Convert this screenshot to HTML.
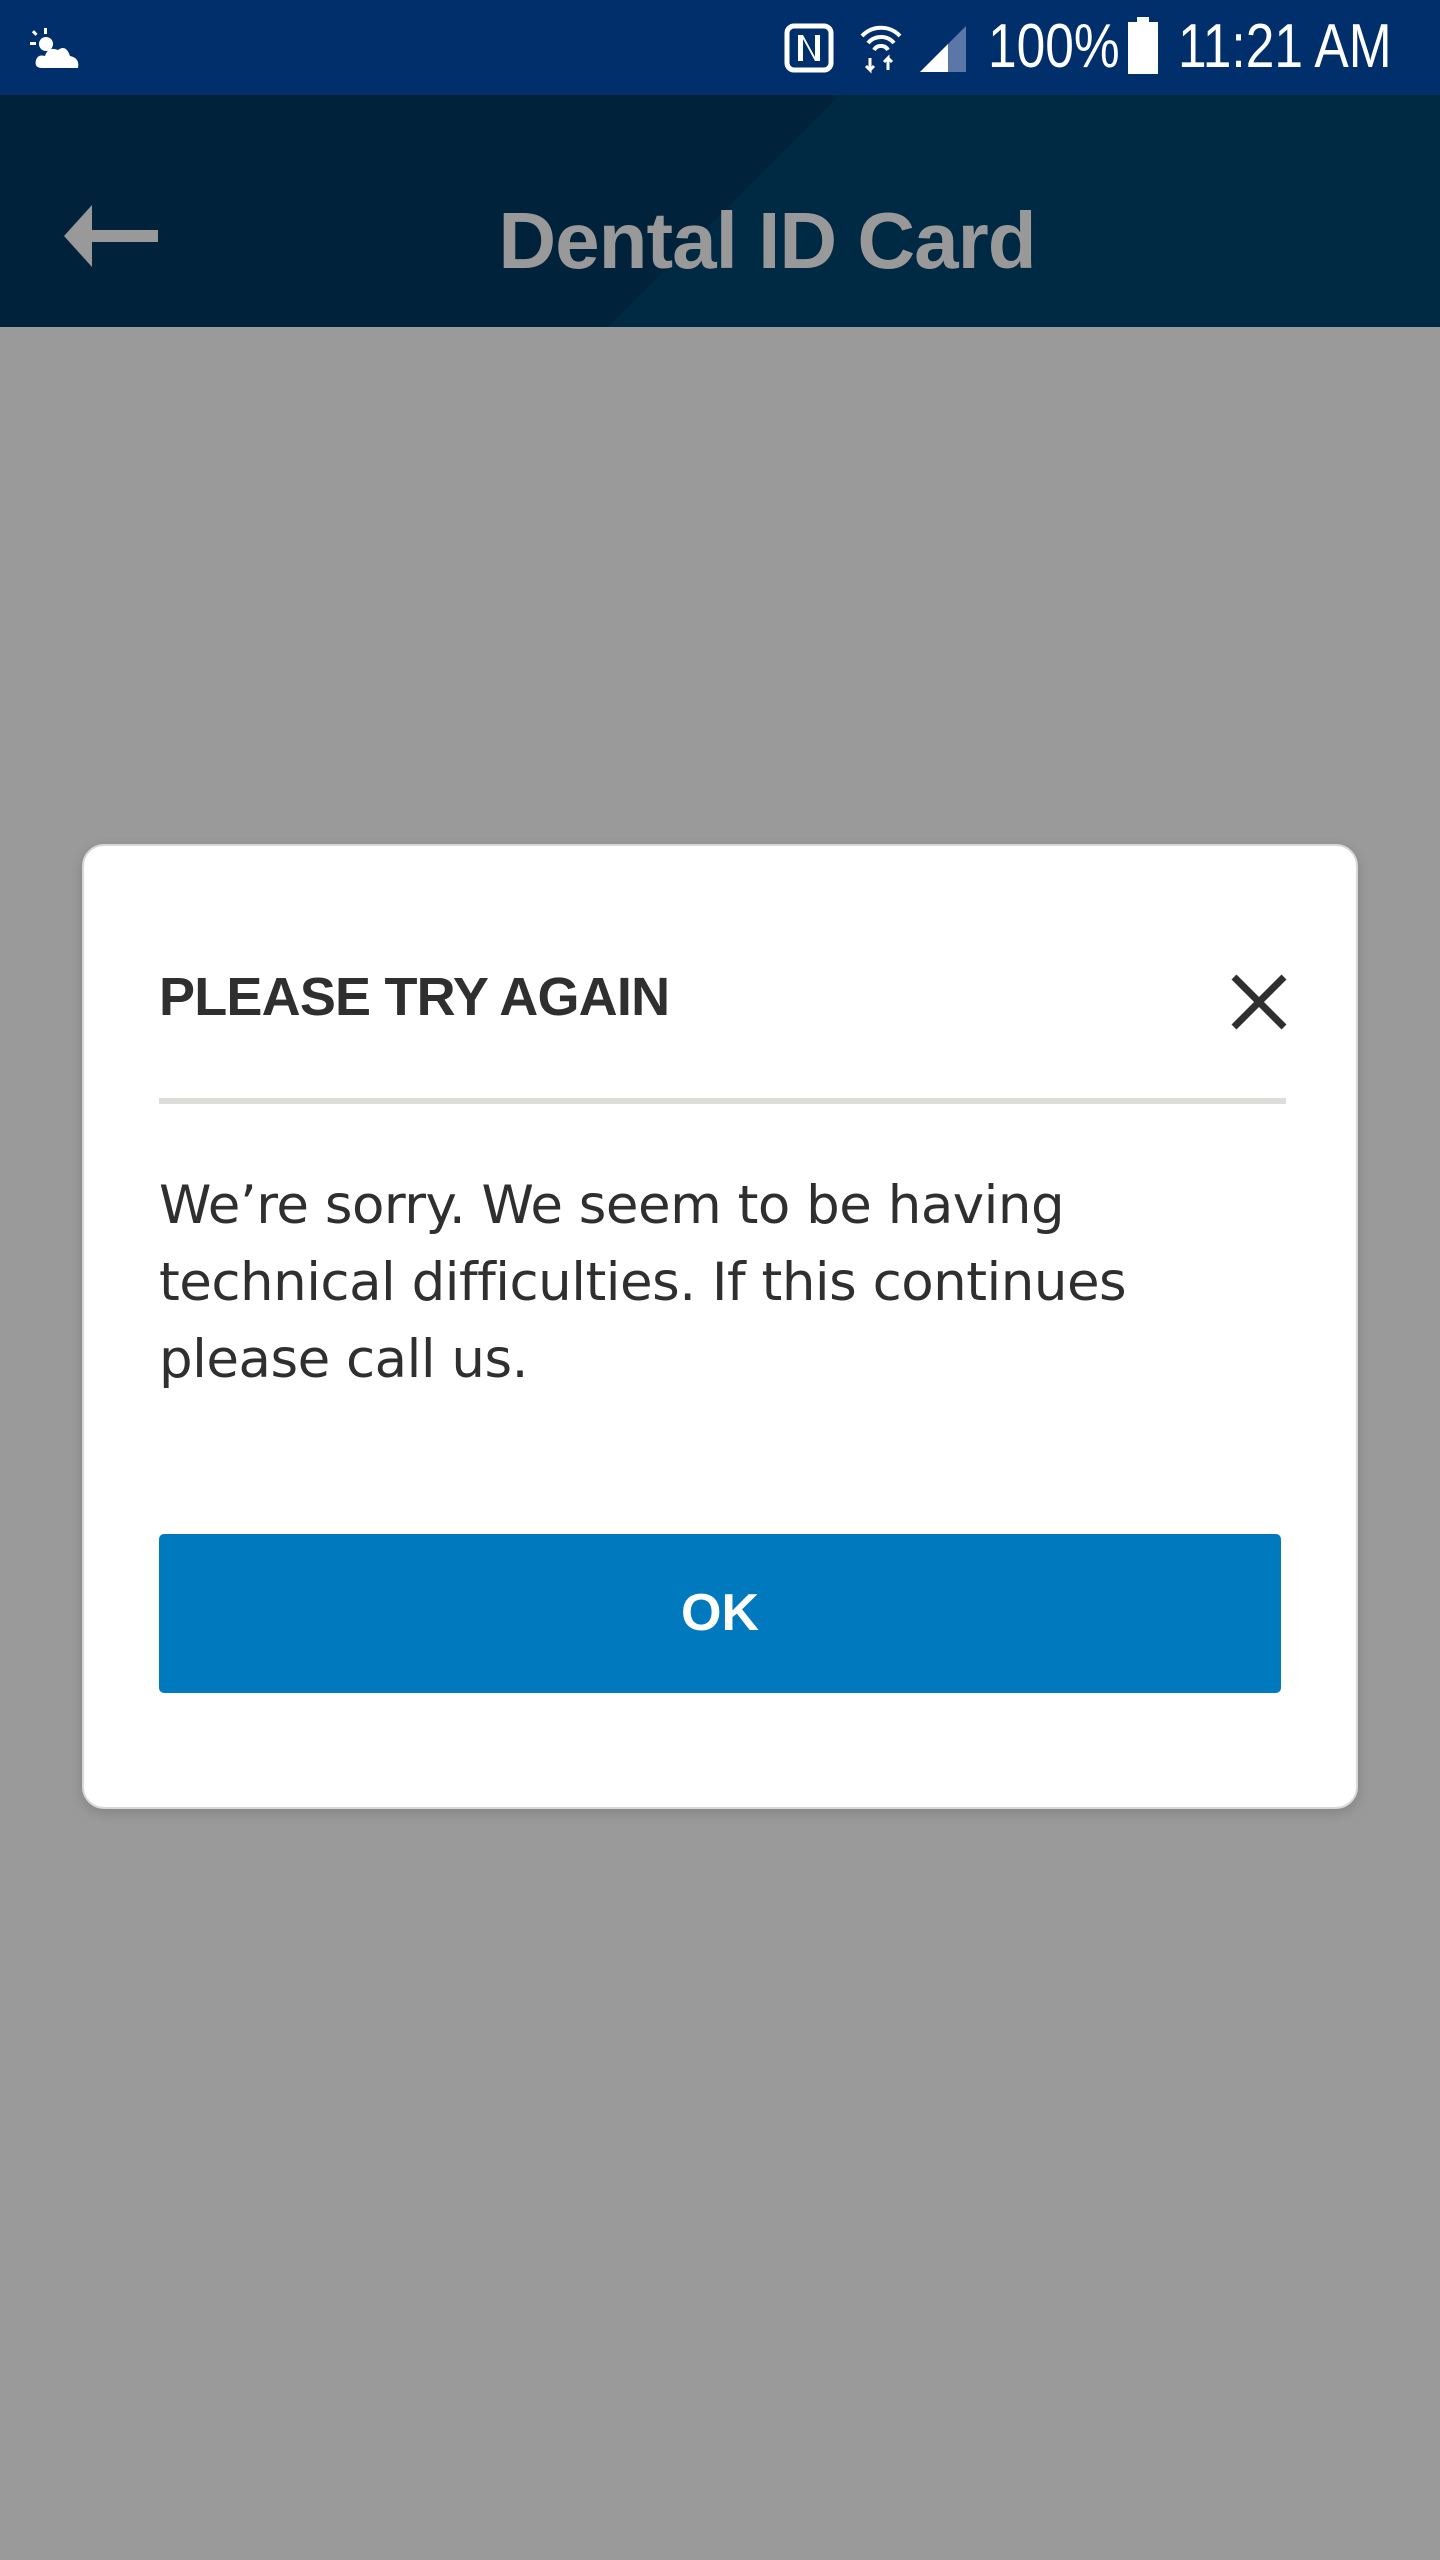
<!DOCTYPE html>
<html><head><meta charset="utf-8"><style>
html,body{margin:0;padding:0;width:1440px;height:2560px;overflow:hidden;background:#9a9a9a;font-family:"Liberation Sans",sans-serif}
.sb{position:absolute;left:0;top:0;width:1440px;height:95px;background:#002f6c;color:#fff}
.hd{position:absolute;left:0;top:95px;width:1440px;height:232px;background:#002943}
.hd2{position:absolute;left:0;top:95px;width:1440px;height:232px;background:#00223b;clip-path:polygon(0 0,840px 0,608px 232px,0 232px)}
.title{position:absolute;left:0;width:1534px;top:125px;height:232px;line-height:232px;text-align:center;color:#999;font-weight:bold;font-size:80px;letter-spacing:-1px}
.dlg{position:absolute;left:82px;top:844px;width:1272px;height:961px;background:#fff;border-radius:22px;border:2px solid #d8d8d8;box-shadow:0 4px 12px rgba(0,0,0,.15)}
.h{position:absolute;left:75px;top:120px;font-size:54px;font-weight:bold;color:#2f2f2f;letter-spacing:-0.8px}
.div{position:absolute;left:75px;top:252px;width:1127px;height:6px;background:#dcdcd9}
.body{position:absolute;left:75px;top:321px;line-height:77px;color:#2f2f2f;font-family:"DejaVu Sans","Liberation Sans",sans-serif;font-size:53px;letter-spacing:-0.5px}
.btn{position:absolute;left:75px;top:688px;width:1122px;height:159px;background:#0079be;border-radius:5px;color:#fff;font-weight:bold;font-size:52px;text-align:center;line-height:159px}
</style></head><body>
<div class="sb">
<svg style="position:absolute;left:28px;top:26px" width="55" height="45" viewBox="0 0 55 45"><g fill="#fff"><circle cx="18" cy="18" r="7"/><rect x="16" y="2" width="3" height="6"/><rect x="2" y="16" width="6" height="3"/><rect x="5" y="5" width="3" height="5" transform="rotate(-45 6 7)"/><path d="M14 42 Q6 42 8 34 Q10 28 17 30 Q20 20 30 24 Q38 18 42 30 Q52 32 50 42 Z"/></g></svg>
<svg style="position:absolute;left:784px;top:23px" width="50" height="50" viewBox="0 0 50 50"><rect x="3" y="3" width="44" height="44" rx="7" fill="none" stroke="#fff" stroke-width="5"/><path d="M14 38V12h5l12 22V12h5v26h-5L19 16v22z" fill="#fff"/></svg>
<svg style="position:absolute;left:858px;top:22px" width="46" height="52" viewBox="0 0 46 52"><g fill="none" stroke="#fff" stroke-width="4"><path d="M4 14a26 26 0 0 1 38 0"/><path d="M10 21a17 17 0 0 1 26 0"/><path d="M16 28a8 8 0 0 1 14 0"/></g><path d="M12 36v12l-4-4M12 48l4-4M30 48V36l-4 4M30 36l4 4" stroke="#fff" stroke-width="3" fill="none"/></svg>
<svg style="position:absolute;left:918px;top:24px" width="50" height="48" viewBox="0 0 50 48"><path d="M2 48L48 2V48Z" fill="#5a77a8"/><path d="M2 48L30 20V48Z" fill="#fff"/></svg>
<div style="position:absolute;left:988px;top:12px;font-size:62px;line-height:70px;transform:scaleX(.83);transform-origin:left">100%</div>
<div style="position:absolute;left:1128px;top:22px;width:30px;height:52px;background:#fff"></div>
<div style="position:absolute;left:1137px;top:17px;width:12px;height:6px;background:#fff"></div>
<div style="position:absolute;left:1178px;top:12px;font-size:62px;line-height:70px;transform:scaleX(.83);transform-origin:left">11:21 AM</div>
</div>
<div class="hd"></div><div class="hd2"></div>
<svg style="position:absolute;left:64px;top:205px" width="95" height="62" viewBox="0 0 95 62"><path d="M0 31L28 0V25H94V37H28V62Z" fill="#999"/></svg>
<div class="title">Dental ID Card</div>
<div class="dlg">
<div class="h">PLEASE TRY AGAIN</div>
<svg style="position:absolute;left:1146px;top:127px" width="58" height="58" viewBox="0 0 58 58"><path d="M4 4L54 54M54 4L4 54" stroke="#2f2f2f" stroke-width="7"/></svg>
<div class="div"></div>
<div class="body">We’re sorry. We seem to be having<br>technical difficulties. If this continues<br>please call us.</div>
<div class="btn">OK</div>
</div>
</body></html>
